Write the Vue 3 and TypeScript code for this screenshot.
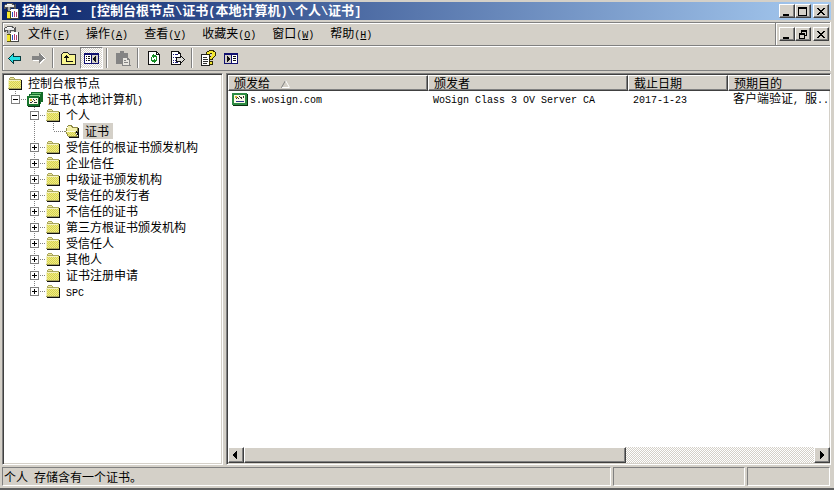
<script setup lang="ts">
import { h, type FunctionalComponent } from 'vue'

type Guide = 'blank' | 'pipe' | 'elbow' | 'plus' | 'minus'
type NodeIcon = 'folder' | 'open' | 'store'

interface TreeRow {
  label: string
  icon: NodeIcon
  guides: Guide[]
  last?: boolean
  selected?: boolean
}

interface MenuEntry {
  label: string
  key: string
}

/* Half-width characters take half the advance of a CJK glyph. */
const Mixed: FunctionalComponent<{ text: string }> = (props) =>
  h(
    'span',
    { class: 'mixed' },
    (props.text.match(/[\x20-\x7e]+|[^\x20-\x7e]+/g) ?? []).map((run) =>
      /[\x20-\x7e]/.test(run) ? h('span', { class: 'half' }, run) : run
    )
  )
Mixed.props = ['text']

const title = '控制台1 - [控制台根节点\\证书(本地计算机)\\个人\\证书]'

const menus: MenuEntry[] = [
  { label: '文件', key: 'F' },
  { label: '操作', key: 'A' },
  { label: '查看', key: 'V' },
  { label: '收藏夹', key: 'O' },
  { label: '窗口', key: 'W' },
  { label: '帮助', key: 'H' }
]

const stores = [
  '受信任的根证书颁发机构',
  '企业信任',
  '中级证书颁发机构',
  '受信任的发行者',
  '不信任的证书',
  '第三方根证书颁发机构',
  '受信任人',
  '其他人',
  '证书注册申请',
  'SPC'
]

const tree: TreeRow[] = [
  { label: '控制台根节点', icon: 'folder', guides: [] },
  { label: '证书(本地计算机)', icon: 'store', guides: ['minus'], last: true },
  { label: '个人', icon: 'folder', guides: ['blank', 'minus'] },
  { label: '证书', icon: 'open', guides: ['blank', 'pipe', 'elbow'], last: true, selected: true },
  ...stores.map(
    (label, i): TreeRow => ({
      label,
      icon: 'folder',
      guides: ['blank', 'plus'],
      last: i === stores.length - 1
    })
  )
]

const columns = ['颁发给', '颁发者', '截止日期', '预期目的']
const certificate = ['s.wosign.com', 'WoSign Class 3 OV Server CA', '2017-1-23', '客户端验证, 服..']

function stem(row: TreeRow, guide: Guide): string {
  if (guide === 'blank') return ''
  if (guide === 'pipe') return 'M7.5 0V16'
  const down = row.last ? '' : 'M7.5 14V16'
  if (guide === 'elbow') return 'M7.5 0V8M8 8.5H19'
  return 'M7.5 0V4M13 8.5H19' + down
}
</script>

<template>
  <svg class="defs" aria-hidden="true">
    <defs>
      <pattern id="weave" width="2" height="2" patternUnits="userSpaceOnUse">
        <rect width="2" height="2" fill="#f0ec84" />
        <rect width="1" height="1" fill="#d6d150" />
        <rect x="1" y="1" width="1" height="1" fill="#d6d150" />
      </pattern>
      <symbol id="i-folder" viewBox="1 0 16 16">
        <path d="M1 5h1V3h1V2h4v1h1v1h6v10H1z" fill="#a9a55c" />
        <path d="M2 5h12v8H2z" fill="url(#weave)" />
        <path d="M3 3h4v1H3z" fill="#efeaa0" />
        <path d="M1 5h12v1H2v7H1z" fill="#f4f2c4" />
        <path d="M14 5h1v10H2v-1h12z" fill="#111" />
      </symbol>
      <symbol id="i-open" viewBox="0 0 16 16">
        <path d="M2 3h1V2h4v1h1v1h5v5h-1V5H7V4H6V3H3v1H2v4H1V5h1z" fill="#8d8944" />
        <path d="M3 3h3v1h1v1h5v4H2V5h1z" fill="#f4f0a8" />
        <path d="M0 8h10v1h1v2h1v2h1v1H3v-1H2v-2H1V9H0z" fill="#8d8944" />
        <path d="M1 9h9v2h1v2H3v-2H2V9z" fill="url(#weave)" />
        <path d="M1 8h9v1H1z" fill="#fffde0" />
        <path d="M13 5h1v10H4v-1h9v-2h-1v-2h-1V8h1v1h1z" fill="#111" />
      </symbol>
      <symbol id="i-cert" viewBox="0 0 16 16">
        <path d="M0 2h15v12H0z" fill="#2d8b43" />
        <path d="M15 3h1v12H1v-1h14z" fill="#0a3010" />
        <path d="M2 4h11v8H2z" fill="#fcfce8" />
        <path d="M3 5h2v2H3z" fill="#d5b633" />
        <path d="M5 6h1v1H5zM7 5h1v1H7zM8 6h2v1H8zM11 5h1v2h-1zM4 7h1v1H4zM6 7h1v1H6zM9 8h1V7H9z" fill="#333" />
        <path d="M4 10h8v1H4z" fill="#27338a" />
      </symbol>
      <symbol id="i-store" viewBox="0 0 16 16">
        <path d="M4 1h12v10H4z" fill="#146b28" />
        <path d="M5 2h9v7H5z" fill="#63c26c" />
        <path d="M2 3h12v10H2z" fill="#146b28" />
        <path d="M3 4h10v8H3z" fill="#8fd992" />
        <path d="M0 5h12v10H0z" fill="#17752d" />
        <path d="M12 6h1v9h-1zM1 15h12v1H1z" fill="#0a3010" />
        <path d="M2 7h9v6H2z" fill="#fcfce8" />
        <path d="M3 8h2v2H3z" fill="#d5b633" />
        <path d="M6 8h1v1H6zM7 9h1v1H7zM9 8h1v1H9zM5 10h1v1H5zM3 11h2v1H3zM7 11h3v1H7z" fill="#333" />
      </symbol>
      <symbol id="i-app" viewBox="0 0 16 16">
        <path d="M6 6h9v9H6z" fill="#fff" />
        <path d="M14 6h1v10H7v-1h7z" fill="#444" />
        <path d="M8 9h1v5H8z" fill="#294cc4" />
        <path d="M10 8h1v6h-1zM12 9h1v5h-1z" fill="#b23c72" />
        <path d="M0 2h1V1h2V0h6v1h1v1h1V1h1v5h-2V5H7v2H3V5H2v1H0z" fill="#555" />
        <path d="M1 2h2V1h5v1h2v2H1z" fill="#e8e8e8" />
        <path d="M3 1h4v1H3z" fill="#fff" />
        <path d="M4 4h2v5H4z" fill="#aaa" />
        <path d="M3 8h4v8H3z" fill="#5a5510" />
        <path d="M3 9h3v6H3z" fill="#f6e82c" />
      </symbol>
    </defs>
  </svg>

  <div class="window">
    <header class="titlebar">
      <svg class="icon"><use href="#i-app" /></svg>
      <h1><Mixed :text="title" /></h1>
      <div class="controls">
        <button class="raised" aria-label="最小化">
          <svg viewBox="0 0 12 10"><path d="M2 8h6v2H2z" /></svg>
        </button>
        <button class="raised" aria-label="最大化">
          <svg viewBox="0 0 12 10"><path d="M1 1h9v9H1zM2 3v6h7V3z" fill-rule="evenodd" /></svg>
        </button>
        <button class="raised close" aria-label="关闭">
          <svg viewBox="0 0 12 10"><path d="M2 2h2v1h1v1h2V3h1V2h2v1H9v1H8v1H7v1h1v1h1v1h1v1H8V8H7V7H5v1H4v1H2V8h1V7h1V6h1V5H4V4H3V3H2z" /></svg>
        </button>
      </div>
    </header>

    <div class="rebar">
      <div class="band menuband">
        <svg class="icon"><use href="#i-app" /></svg>
        <nav class="menus">
          <button v-for="m in menus" :key="m.key" class="menu">
            {{ m.label }}<span class="half">(<u>{{ m.key }}</u>)</span>
          </button>
        </nav>
        <div class="controls child">
          <button class="raised" aria-label="最小化窗口">
            <svg viewBox="0 0 12 10"><path d="M2 8h6v2H2z" /></svg>
          </button>
          <button class="raised" aria-label="还原窗口">
            <svg viewBox="0 0 12 10"><path d="M4 1h6v6H8v3H2V4h2zM5 3v1h3v2h1V3zM3 6v3h4V6z" fill-rule="evenodd" /></svg>
          </button>
          <button class="raised close" aria-label="关闭窗口">
            <svg viewBox="0 0 12 10"><path d="M2 2h2v1h1v1h2V3h1V2h2v1H9v1H8v1H7v1h1v1h1v1h1v1H8V8H7V7H5v1H4v1H2V8h1V7h1V6h1V5H4V4H3V3H2z" /></svg>
          </button>
        </div>
      </div>

      <div class="band toolband">
        <button class="tool" aria-label="后退">
          <svg class="icon">
            <path d="M1 8h1V7h1V6h1V5h1V4h1V3h1v3h7v5H7v3H6v-1H5v-1H4v-1H3v-1H2V9H1z" fill="#063c40" />
            <path d="M2 8h1V7h1V6h1V5h1v2h7v3H6v2H5v-1H4v-1H3V9H2z" fill="#27dfe5" />
          </svg>
        </button>
        <button class="tool" aria-label="前进" disabled>
          <svg class="icon">
            <path d="M16 9h-1v1h-1v1h-1v1h-1v1h-1v1h-1v-3H3V7h7V4h1" fill="#fff" />
            <path d="M15 8h-1V7h-1V6h-1V5h-1V4h-1V3H9v3H2v4h7v3h1v-1h1v-1h1v-1h1V9h2z" fill="#848484" />
          </svg>
        </button>
        <i class="divider"></i>
        <button class="tool" aria-label="上一级">
          <svg class="icon">
            <path d="M0 4h1V3h1V2h5v1h1v1h7v11H0z" fill="#222" />
            <path d="M1 4h1V3h5v1h1v1h6v9H1z" fill="#f8f58f" />
            <path d="M5 5h1v1h1v1h1v1H6v3h6v1H5V8H3V7h1V6h1z" fill="#111" />
          </svg>
        </button>
        <button class="tool pressed" aria-label="显示/隐藏控制台树">
          <svg class="icon">
            <path d="M0 3h15v11H0z" fill="#10106e" />
            <path d="M1 5h6v8H1zM8 5h6v8H8z" fill="#fff" />
            <path d="M8 5h6v8H8z" fill="#d4d0c8" />
            <path d="M2 6h1v1H2zM4 6h2v1H4zM2 8h1v1H2zM4 8h2v1H4zM2 10h1v1H2zM4 10h2v1H4zM12 6v6h-1v-1h-1v-1H9V8h1V7h1V6z" fill="#111" />
          </svg>
        </button>
        <i class="divider"></i>
        <button class="tool" aria-label="粘贴" disabled>
          <svg class="icon">
            <path d="M1 3h4V1h4v2h4v11H1z" fill="#848484" />
            <path d="M7 7h6v1h1v1h1v6h1v1H7z" fill="#848484" />
            <path d="M8 8h4v2h2v5H8z" fill="#e8e6e0" />
            <path d="M9 10h2v1H9zM9 12h4v1H9z" fill="#848484" />
          </svg>
        </button>
        <i class="divider"></i>
        <button class="tool" aria-label="刷新">
          <svg class="icon">
            <path d="M2 1h9v1h1v1h1v1h1v11H2z" fill="#111" />
            <path d="M3 2h7v3h3v9H3z" fill="#fff" />
            <path d="M11 3v1h1z" fill="#fff" />
            <path d="M7 4h1v1h2v1h1v2h-1V7H8v1H7V7H6V5h1zM5 7h1v3H5zM6 10h2V9h1v1h1v2H9v1H8v-1H6v-1H5v-1zM10 8h1v3h-1z" fill="#168c25" />
          </svg>
        </button>
        <button class="tool" aria-label="导出列表">
          <svg class="icon">
            <path d="M2 1h8v1h1v1h1v12H2z" fill="#111" />
            <path d="M3 2h6v2h2v10H3z" fill="#fff" />
            <path d="M4 4h1v1H4zM6 4h3v1H6zM4 7h1v1H4zM6 7h3v1H6zM4 10h1v1H4zM6 10h2v1H6zM4 12h1v1H4zM6 12h3v1H6z" fill="#20207a" />
            <path d="M7 7h4V5h1v1h1v1h1v1h1v1h1v1h-1v1h-1v1h-1v1h-1v1h-1v-2H7z" fill="#111" />
            <path d="M8 8h4V7h1v1h1v1h1v1h-1v1h-1v1h-1v-1H8z" fill="#deddd8" />
          </svg>
        </button>
        <i class="divider"></i>
        <button class="tool" aria-label="帮助">
          <svg class="icon">
            <path d="M1 4h9v12H1z" fill="#222" />
            <path d="M2 5h7v10H2z" fill="#fff" />
            <path d="M3 7h4v1H3zM3 9h5v1H3zM3 11h5v1H3zM3 13h4v1H3z" fill="#333" />
            <path d="M6 2h1V1h2V0h5v1h1v1h1v4h-1v1h-1v1h-1v2h-4V7h1V6h2V4h-2v1H6zM9 11h4v4H9z" fill="#302c05" />
            <path d="M7 2h2V1h4v1h2v4h-1v1h-1v1h-1v1h-2V7h1V6h1V3h-2v1H7zM10 12h2v2h-2z" fill="#f3e630" />
          </svg>
        </button>
        <button class="tool" aria-label="显示/隐藏操作窗格">
          <svg class="icon">
            <path d="M1 3h14v11H1z" fill="#10106e" />
            <path d="M2 5h6v8H2z" fill="#d4d0c8" />
            <path d="M9 5h5v8H9z" fill="#fff" />
            <path d="M4 6h1v1h1v1h1v2H6v1H5v1H4zM10 6h3v1h-3zM10 8h3v1h-3zM10 10h3v1h-3z" fill="#111" />
          </svg>
        </button>
      </div>
    </div>

    <main class="panes">
      <section class="pane treepane">
        <ul class="tree" role="tree">
          <li v-for="(row, n) in tree" :key="n" class="node" role="treeitem" :aria-selected="!!row.selected">
            <svg v-for="(guide, i) in row.guides" :key="i" class="guide">
              <path class="dots" :d="stem(row, guide)" />
              <template v-if="guide === 'plus' || guide === 'minus'">
                <rect class="box" x="3.5" y="4.5" width="8" height="8" />
                <path d="M5 8h5v1H5z" />
                <path v-if="guide === 'plus'" d="M7 6h1v5H7z" />
              </template>
            </svg>
            <svg class="icon"><use :href="'#i-' + row.icon" /></svg>
            <span class="label" :class="{ selected: row.selected }"><Mixed :text="row.label" /></span>
          </li>
        </ul>
      </section>

      <section class="pane listpane">
        <table class="list">
          <colgroup>
            <col class="wide" />
            <col class="wide" />
            <col class="date" />
            <col />
          </colgroup>
          <thead>
            <tr>
              <th v-for="(c, i) in columns" :key="c" scope="col">
                {{ c }}
                <svg v-if="i === 0" class="sort" viewBox="0 0 9 8">
                  <path d="M8.500 7.500H.5L4.500.5" fill="none" stroke="#808080" />
                  <path d="M4.500.5l4 7H1" fill="none" stroke="#fff" />
                </svg>
              </th>
            </tr>
          </thead>
          <tbody>
            <tr>
              <td v-for="(value, i) in certificate" :key="i" :class="{ first: i === 0 }">
                <div class="cell">
                  <svg v-if="i === 0" class="icon"><use href="#i-cert" /></svg>
                  <Mixed :text="value" />
                </div>
              </td>
            </tr>
          </tbody>
        </table>
        <div class="scrollbar">
          <button class="raised arrow" aria-label="向左滚动">
            <svg viewBox="0 0 12 10"><path d="M7 1v8H6V8H5V7H4V6H3V4h1V3h1V2h1V1z" /></svg>
          </button>
          <div class="track"><div class="raised thumb"></div></div>
          <button class="raised arrow" aria-label="向右滚动">
            <svg viewBox="0 0 12 10"><path d="M4 1v8h1V8h1V7h1V6h1V4H7V3H6V2H5V1z" /></svg>
          </button>
        </div>
      </section>
    </main>

    <footer class="status">
      <div class="message"><Mixed text="个人 存储含有一个证书。" /></div>
      <div class="middle"></div>
      <div class="end"></div>
    </footer>
  </div>
</template>

<style>
body {
  margin: 0;
}
.half {
  font-family: 'Liberation Mono', monospace;
  font-size: 10px;
}
.mixed {
  white-space: pre;
}
h1 .half {
  font-size: 12px;
}
</style>

<style scoped>
.defs {
  position: absolute;
  width: 0;
  height: 0;
}
.window {
  --face: #d4d0c8;
  --dark: #404040;
  --shade: #808080;
  box-sizing: border-box;
  display: flex;
  flex-direction: column;
  min-height: 100vh;
  padding: 2px 3px 0 2px;
  border-bottom: 2px solid #606060;
  background: var(--face);
  color: #000;
  font-family: 'Noto Sans CJK SC', sans-serif;
  font-size: 12px;
  line-height: 16px;
}
svg {
  display: block;
  shape-rendering: crispEdges;
}
.icon {
  flex: none;
  width: 16px;
  height: 16px;
}
button {
  padding: 0;
  border: 0;
  background: none;
  color: inherit;
  font: inherit;
}
.raised {
  box-sizing: border-box;
  border: 1px solid;
  border-color: #fff var(--dark) var(--dark) #fff;
  background: var(--face);
  box-shadow: inset -1px -1px var(--shade);
}
.titlebar {
  display: flex;
  align-items: center;
  height: 18px;
  padding: 0 2px;
  background: linear-gradient(90deg, #0a246a, #a6caf0);
  color: #fff;
}
h1 {
  flex: 1;
  margin: 0 0 0 2px;
  font-size: 13px;
  font-weight: 700;
  line-height: 18px;
}
.controls {
  display: flex;
}
.controls .raised {
  width: 16px;
  height: 14px;
}
.controls svg {
  width: 12px;
  height: 10px;
  margin-left: 1px;
}
.controls .close {
  margin-left: 2px;
}
.rebar {
  margin-top: 2px;
  border-left: 1px solid var(--shade);
  border-right: 1px solid #fff;
}
.band {
  display: flex;
  align-items: center;
  box-sizing: border-box;
  border-top: 1px solid var(--shade);
  box-shadow: inset 1px 1px #fff;
}
.menuband {
  height: 23px;
  padding-left: 1px;
}
.menus {
  display: flex;
  flex: 1;
}
.menu {
  padding: 0 8px;
  line-height: 16px;
  white-space: nowrap;
}
.child {
  align-items: center;
  align-self: stretch;
  padding: 0 1px 0 3px;
  border-left: 1px solid var(--shade);
  box-shadow: inset 1px 1px #fff;
}
.toolband {
  height: 26px;
  border-bottom: 1px solid var(--shade);
}
.tool {
  display: grid;
  place-items: center;
  width: 23px;
  height: 22px;
}
.pressed {
  box-sizing: border-box;
  border: 1px solid;
  border-color: var(--shade) #fff #fff var(--shade);
  background: repeating-conic-gradient(#fff 0 25%, var(--face) 0 50%) 0 0 / 2px 2px;
}
.divider {
  width: 2px;
  height: 20px;
  margin: 0 3px;
  background: linear-gradient(90deg, var(--shade) 50%, #fff 50%);
}
.panes {
  display: flex;
  flex: 1;
  gap: 3px;
  padding-top: 2px;
}
.pane {
  box-sizing: border-box;
  min-width: 0;
  border: 1px solid;
  border-color: var(--shade) #fff #fff var(--shade);
  box-shadow: inset 1px 1px var(--dark), inset -1px -1px var(--face);
  background: #fff;
}
.treepane {
  width: 221px;
  padding: 1px 2px;
}
.tree {
  margin: 0;
  padding: 0 0 0 3px;
  list-style: none;
}
.node {
  display: flex;
  height: 16px;
}
.guide {
  flex: none;
  width: 19px;
  height: 16px;
}
.dots {
  fill: none;
  stroke: #808080;
  stroke-dasharray: 1 1;
}
.box {
  fill: #fff;
  stroke: #808080;
}
.label {
  margin-left: 2px;
  padding: 0 2px;
  white-space: nowrap;
}
.selected {
  padding-right: 4px;
  background: var(--face);
}
.listpane {
  display: flex;
  flex: 1;
  flex-direction: column;
  padding: 1px 0 1px 1px;
}
.list {
  width: 100%;
  border-collapse: separate;
  border-spacing: 0;
  table-layout: fixed;
}
.wide {
  width: 200px;
}
.date {
  width: 100px;
}
th {
  height: 14px;
  padding: 0 0 0 5px;
  border: 1px solid;
  border-color: #fff var(--dark) var(--dark) #fff;
  background: var(--face);
  box-shadow: inset -1px -1px var(--shade);
  font-weight: 400;
  line-height: 14px;
  text-align: left;
  white-space: nowrap;
}
th:last-child {
  border-right: 0;
  box-shadow: inset 0 -1px var(--shade);
}
.sort {
  display: inline-block;
  width: 9px;
  height: 8px;
  margin-left: 8px;
  shape-rendering: auto;
}
td {
  height: 16px;
  padding: 0 0 0 5px;
}
.first {
  padding-left: 4px;
}
.cell {
  display: flex;
  gap: 2px;
  line-height: 14px;
}
.scrollbar {
  display: flex;
  height: 16px;
  margin-top: auto;
}
.arrow {
  display: grid;
  place-items: center;
  width: 16px;
}
.arrow svg {
  width: 12px;
  height: 10px;
}
.track {
  flex: 1;
  background: repeating-conic-gradient(#fff 0 25%, var(--face) 0 50%) 0 0 / 2px 2px;
}
.thumb {
  width: 67%;
  height: 16px;
}
.status {
  display: flex;
  gap: 2px;
  padding: 2px 1px 2px 0;
}
.status > div {
  box-sizing: border-box;
  height: 19px;
  padding-left: 1px;
  border: 1px solid;
  border-color: var(--shade) #fff #fff var(--shade);
  line-height: 17px;
}
.message {
  flex: 1;
}
.middle {
  width: 132px;
}
.end {
  width: 83px;
}
</style>
